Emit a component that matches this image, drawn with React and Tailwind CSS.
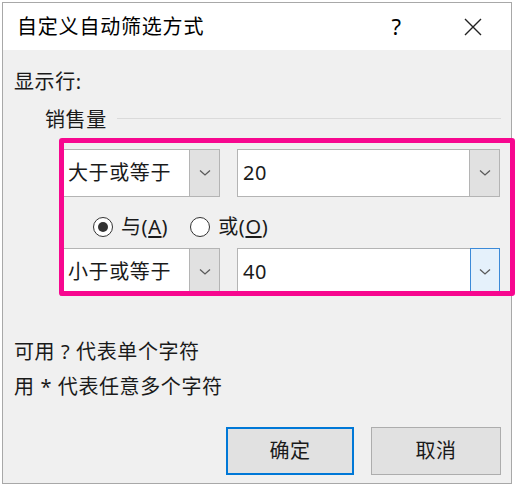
import React from 'react';

const font = { fontFamily: '"Noto Sans", "Noto Sans CJK SC", sans-serif' };

function Chevron() {
  return (
    <svg width="12" height="8" viewBox="0 0 12 8" className="block">
      <polyline points="1,1.5 6,6 11,1.5" fill="none" stroke="#5a5a5a" strokeWidth="1.3" />
    </svg>
  );
}

function Combo({ value, width, btnClass, textPad }) {
  return (
    <div className={`flex h-[48px] border border-[#b4b4b4] bg-white ${width}`}>
      <div className={`flex-1 flex items-center text-[20px] text-[#1a1a1a] tracking-[0.6px] ${textPad}`}>{value}</div>
      <div className={`w-[30px] flex items-center justify-center ${btnClass}`}>
        <Chevron />
      </div>
    </div>
  );
}

function Radio({ checked, label, hotkey }) {
  return (
    <div className="flex items-center">
      <div className="w-[20px] h-[20px] rounded-full border-[1.5px] border-[#333] bg-white flex items-center justify-center">
        {checked && <div className="w-[10px] h-[10px] rounded-full bg-[#333]" />}
      </div>
      <span className="ml-[8px] text-[20px] text-[#1a1a1a] leading-[28px] tracking-[0.6px]">
        {label}(<span className="underline underline-offset-2">{hotkey}</span>)
      </span>
    </div>
  );
}

export default function App() {
  return (
    <div className="relative w-[518px] h-[487px] bg-white overflow-hidden" style={font}>
      <div className="ml-[2px] mt-[2px] w-[510px] h-[482px] border border-[#a8a8a8] flex flex-col">
        {/* title bar */}
        <div className="h-[47px] bg-white flex items-center pl-[14px] pr-[28px]">
          <span className="text-[20px] text-black tracking-[0.8px]">自定义自动筛选方式</span>
          <span className="ml-auto text-[22px] text-black">?</span>
          <svg width="20" height="20" viewBox="0 0 20 20" className="ml-[62px]">
            <path d="M2 2 L18 18 M18 2 L2 18" stroke="#222" strokeWidth="1.4" />
          </svg>
        </div>

        {/* body */}
        <div className="flex-1 bg-[#f0f0f0] flex flex-col pl-[11px] pr-[10px] text-[20px] text-[#1a1a1a] tracking-[0.6px]">
          <div className="mt-[18px] h-[28px] leading-[28px]">显示行:</div>

          <div className="mt-[10px] h-[28px] flex items-center">
            <span className="ml-[31px] leading-[28px]">销售量</span>
            <div className="flex-1 ml-[10px] h-px bg-[#dadada] -mt-[3px]" />
          </div>

          <div className="mt-[15px] flex ml-[46px]">
            <Combo value="大于或等于" width="w-[160px]" textPad="pl-[7px]"
              btnClass="bg-[#e1e1e1] border-l border-[#b4b4b4]" />
            <Combo value="20" width="w-[263px] ml-[17px]" textPad="pl-[5px]"
              btnClass="bg-[#e1e1e1] border-l border-[#b4b4b4]" />
          </div>

          <div className="mt-[16px] h-[28px] flex items-center ml-[79px] gap-[22px]">
            <Radio checked label="与" hotkey="A" />
            <Radio label="或" hotkey="O" />
          </div>

          <div className="mt-[7px] flex ml-[46px]">
            <Combo value="小于或等于" width="w-[160px]" textPad="pl-[7px]"
              btnClass="bg-[#e1e1e1] border-l border-[#b4b4b4]" />
            <Combo value="40" width="w-[263px] ml-[17px]" textPad="pl-[5px]"
              btnClass="bg-[#e5f1fb] border border-[#3c8ad8] -my-px -mr-px" />
          </div>

          <div className="mt-[42px] h-[28px] leading-[28px]">可用 ? 代表单个字符</div>
          <div className="mt-[7px] h-[28px] leading-[28px]">用 * 代表任意多个字符</div>

          <div className="mt-[26px] flex justify-end gap-[17px]">
            <button className="w-[128px] h-[48px] bg-[#e1e1e1] border-2 border-[#0078d7] tracking-[0.6px]">确定</button>
            <button className="w-[130px] h-[48px] bg-[#e1e1e1] border border-[#adadad] tracking-[0.6px]">取消</button>
          </div>
        </div>
      </div>

      {/* highlight annotation */}
      <div className="absolute left-[59px] top-[138px] w-[456px] h-[158px] border-[5px] border-[#f7078f] rounded-[3px] pointer-events-none" />
    </div>
  );
}
